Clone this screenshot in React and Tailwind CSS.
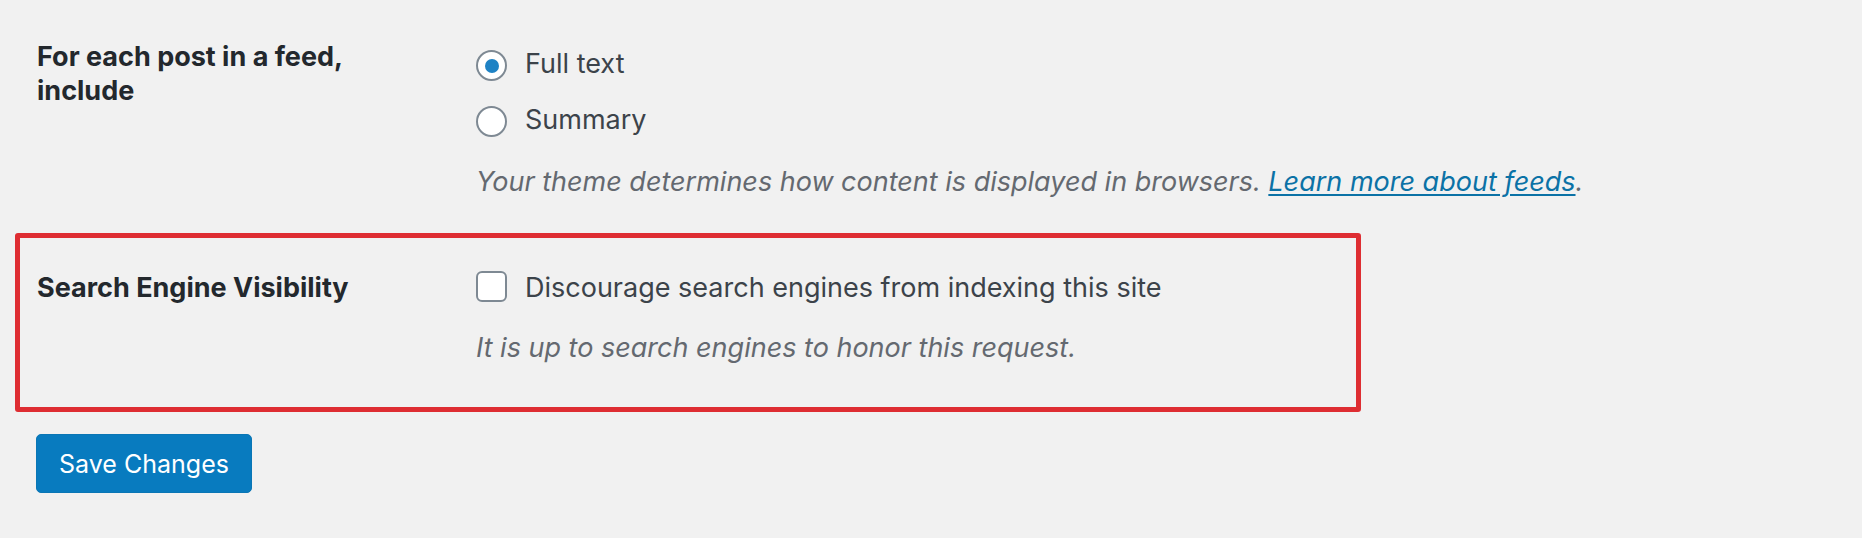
import React from "react";

function Radio({ checked }) {
  return (
    <span className="mt-[3px] flex h-[31px] w-[31px] shrink-0 items-center justify-center rounded-full border-2 border-[#7e8993] bg-white">
      {checked && <span className="h-[14px] w-[14px] rounded-full bg-[#1e82c4]" />}
    </span>
  );
}

function Checkbox() {
  return (
    <span className="flex h-[31px] w-[31px] shrink-0 rounded-[6px] border-2 border-[#7e8993] bg-white" />
  );
}

export default function App() {
  return (
    <div className="min-h-screen bg-[#f1f1f1] pl-[15px] pt-[40px] font-[Inter,sans-serif] text-[27px] leading-[34px] text-[#3c434a]">
      {/* Feed row */}
      <div className="flex pl-[22px]">
        <div className="w-[439px] shrink-0">
          <div className="w-[360px] font-bold text-[#23282d]">For each post in a feed, include</div>
        </div>
        <div className="flex flex-col pt-[7px]">
          <label className="flex items-center gap-[18px]">
            <Radio checked />
            <span>Full text</span>
          </label>
          <label className="mt-[22px] flex items-center gap-[18px]">
            <Radio />
            <span>Summary</span>
          </label>
          <p className="mt-[28px] italic text-[#646970]">
            Your theme determines how content is displayed in browsers.{" "}
            <a className="text-[#0b72a6] underline decoration-[2px] underline-offset-[3px]">Learn more about feeds</a>.
          </p>
        </div>
      </div>

      {/* Highlighted row */}
      <div className="mt-[34px] w-[1346px] rounded-[3px] border-[5px] border-[#de2d32] pb-[42px] pl-[17px] pt-[33px]">
        <div className="flex">
          <div className="w-[439px] shrink-0 font-bold text-[#23282d]">Search Engine Visibility</div>
          <div className="flex flex-col">
            <label className="flex items-center gap-[18px]">
              <span className="-mt-[4px]">
                <Checkbox />
              </span>
              <span>Discourage search engines from indexing this site</span>
            </label>
            <p className="mt-[26px] italic text-[#646970]">It is up to search engines to honor this request.</p>
          </div>
        </div>
      </div>

      {/* Submit */}
      <div className="mt-[22px] pl-[21px]">
        <button className="flex h-[59px] w-[216px] items-center justify-center rounded-[5px] border border-[#0a76b5] bg-[#087bbf] text-[25px] text-white">
          Save Changes
        </button>
      </div>
    </div>
  );
}
